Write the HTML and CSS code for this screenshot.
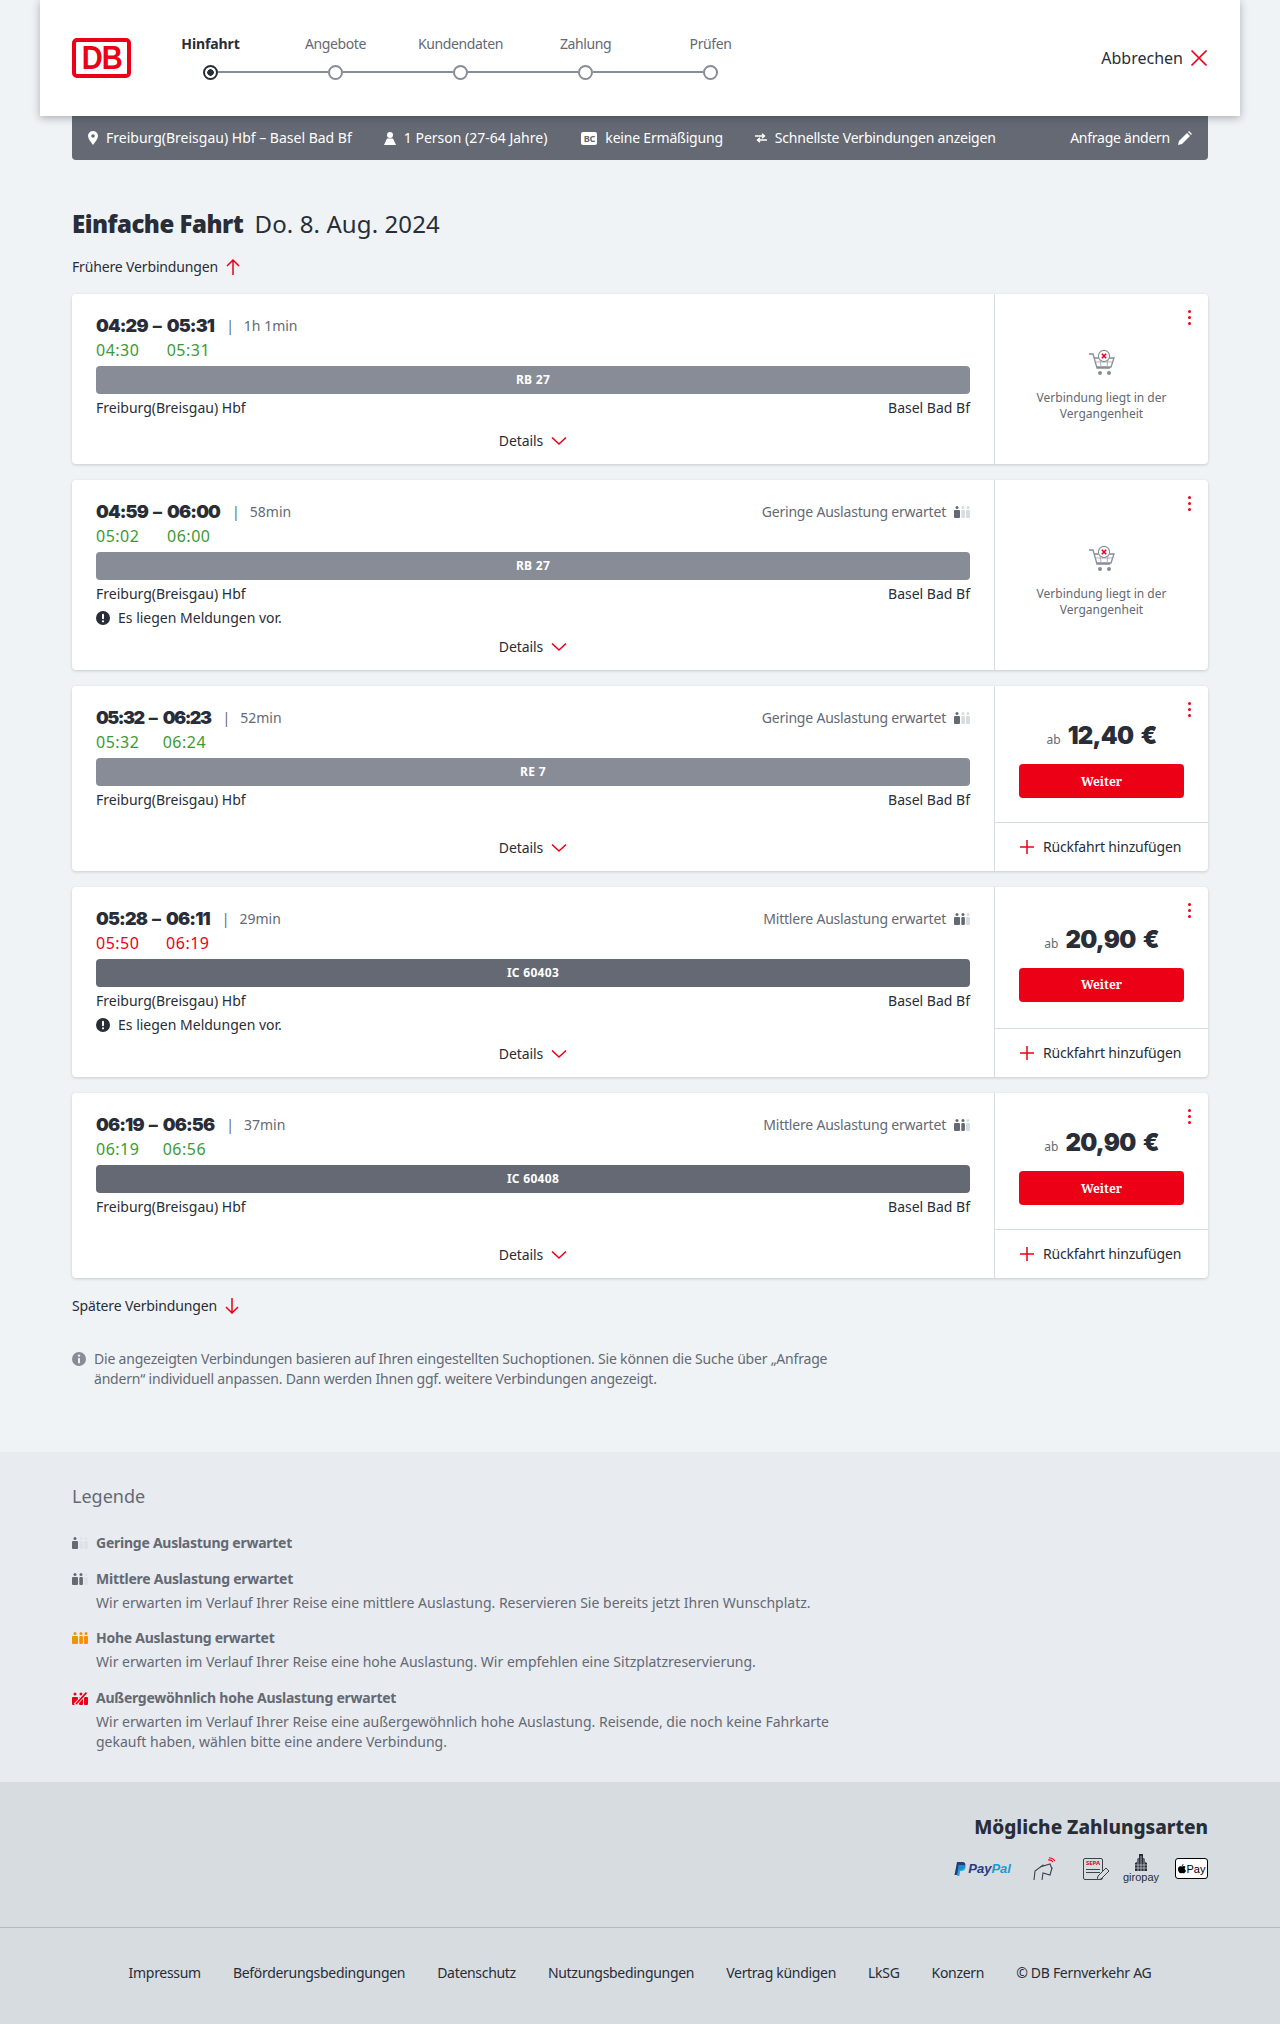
FILE: index.html
```html
<!DOCTYPE html>
<html lang="de">
<head>
    <meta charset="UTF-8">
    <meta name="viewport" content="width=device-width, initial-scale=1.0">
    <title>Einfache Fahrt</title>
    <link rel="stylesheet" href="styles.css">
</head>
<body>
    <svg class="defs" width="0" height="0">
        <symbol id="occ" viewBox="0 0 16 12">
            <circle class="p1" cx="3" cy="1.5" r="1.5"/><rect class="p1" x="0" y="4" width="6" height="8" rx="1"/>
            <circle class="p2" cx="9" cy="1.5" r="1.5"/><rect class="p2" x="7.3" y="4" width="3.6" height="8" rx="1"/>
            <circle class="p3" cx="14" cy="1.5" r="1.5"/><rect class="p3" x="12" y="4" width="4" height="8" rx="1"/>
        </symbol>
        <symbol id="cart" viewBox="0 0 28 28">
            <path d="M1 5h4l4 14h13M6 9h20l-3 9H9" fill="none" stroke="#878c96" stroke-width="1.3"/>
            <path d="M8 13h16M12 9l1 9M20 9l-1 9" fill="none" stroke="#afb4bb" stroke-width="1.1"/>
            <circle cx="16" cy="7" r="5.6" fill="#fff" stroke="#878c96" stroke-width="1.1"/>
            <path d="M13.8 4.8l4.4 4.4M18.2 4.8l-4.4 4.4" stroke="#ec0016" stroke-width="1.6"/>
            <circle cx="12" cy="24" r="2" fill="#878c96"/><circle cx="21" cy="24" r="2" fill="#878c96"/>
        </symbol>
        <symbol id="chev" viewBox="0 0 16 10">
            <path d="M1 1.5l7 6.5 7-6.5" fill="none" stroke="#ec0016" stroke-width="1.6"/>
        </symbol>
        <symbol id="plus" viewBox="0 0 16 16">
            <path d="M8 1v14M1 8h14" stroke="#ec0016" stroke-width="1.5"/>
        </symbol>
        <symbol id="alert" viewBox="0 0 14 14">
            <circle cx="7" cy="7" r="7" fill="#282d37"/><rect x="6" y="2.8" width="2" height="5.4" rx="1" fill="#fff"/><circle cx="7" cy="10.3" r="1.1" fill="#fff"/>
        </symbol>
    </svg>

    <header class="topbar">
        <div class="db-logo"><span>DB</span></div>
        <div class="steps">
            <div class="step-labels">
                <span class="current">Hinfahrt</span>
                <span>Angebote</span>
                <span>Kundendaten</span>
                <span>Zahlung</span>
                <span>Prüfen</span>
            </div>
            <div class="step-track">
                <i class="dot active"></i><b></b>
                <i class="dot"></i><b></b>
                <i class="dot"></i><b></b>
                <i class="dot"></i><b></b>
                <i class="dot"></i>
            </div>
        </div>
        <a class="cancel">Abbrechen
            <svg width="18" height="18" viewBox="0 0 18 18"><path d="M1.5 1.5l15 15M16.5 1.5l-15 15" stroke="#ec0016" stroke-width="1.7"/></svg>
        </a>
    </header>

    <div class="summary">
        <span class="summary-item">
            <svg width="10" height="14" viewBox="0 0 10 14"><path d="M5 0a5 5 0 0 1 5 5c0 3-3 6-5 9-2-3-5-6-5-9a5 5 0 0 1 5-5z" fill="#fff"/><circle cx="5" cy="5" r="1.8" fill="#646973"/></svg>
            Freiburg(Breisgau) Hbf – Basel Bad Bf
        </span>
        <span class="summary-item">
            <svg width="12" height="13" viewBox="0 0 12 13"><circle cx="6" cy="3" r="3" fill="#fff"/><path d="M3 6.5h6l3 6.5H0z" fill="#fff"/></svg>
            1 Person (27-64 Jahre)
        </span>
        <span class="summary-item tight">
            <span class="bc-icon">BC</span>
            keine Ermäßigung
        </span>
        <span class="summary-item tight">
            <svg width="12" height="10" viewBox="0 0 12 10"><path d="M0 3h9M7 0.8L9.5 3 7 5.2M12 7H3M5 4.8L2.5 7 5 9.2" fill="none" stroke="#fff" stroke-width="1.4"/></svg>
            Schnellste Verbindungen anzeigen
        </span>
        <a class="summary-edit">Anfrage ändern
            <svg width="14" height="14" viewBox="0 0 14 14"><path d="M0 14l1-4 8-8 3 3-8 8zM10 1l1-1 3 3-1 1z" fill="#fff"/></svg>
        </a>
    </div>

    <main class="content">
        <h1 class="page-title"><strong>Einfache Fahrt</strong> Do. 8. Aug. 2024</h1>

        <a class="more-link">Frühere Verbindungen
            <svg width="14" height="16" viewBox="0 0 14 16"><path d="M7 16V1M1 7l6-6 6 6" fill="none" stroke="#ec0016" stroke-width="1.5"/></svg>
        </a>

        <div class="card-list">
            <article class="card">
                <div class="card-main">
                    <div class="times">
                        <b class="t">04:29</b><b class="dash">–</b><b class="t">05:31</b>
                        <div class="times-rest"><span class="sep">|</span><span class="dur">1h 1min</span></div>
                        <span class="rt ok">04:30</span><span></span><span class="rt ok">05:31</span>
                    </div>
                    <div class="train light">RB 27</div>
                    <div class="stations"><span>Freiburg(Breisgau) Hbf</span><span>Basel Bad Bf</span></div>
                    <div class="details">Details <svg width="16" height="10"><use href="#chev"/></svg></div>
                </div>
                <div class="card-side">
                    <div class="kebab"><i></i><i></i><i></i></div>
                    <div class="past">
                        <svg width="28" height="28"><use href="#cart"/></svg>
                        <p>Verbindung liegt in der Vergangenheit</p>
                    </div>
                </div>
            </article>

            <article class="card">
                <div class="card-main">
                    <div class="times">
                        <b class="t">04:59</b><b class="dash">–</b><b class="t">06:00</b>
                        <div class="times-rest"><span class="sep">|</span><span class="dur">58min</span><span class="occ">Geringe Auslastung erwartet <svg class="lvl1" width="16" height="12"><use href="#occ"/></svg></span></div>
                        <span class="rt ok">05:02</span><span></span><span class="rt ok">06:00</span>
                    </div>
                    <div class="train light">RB 27</div>
                    <div class="stations"><span>Freiburg(Breisgau) Hbf</span><span>Basel Bad Bf</span></div>
                    <div class="notice"><svg width="14" height="14"><use href="#alert"/></svg> Es liegen Meldungen vor.</div>
                    <div class="details">Details <svg width="16" height="10"><use href="#chev"/></svg></div>
                </div>
                <div class="card-side">
                    <div class="kebab"><i></i><i></i><i></i></div>
                    <div class="past">
                        <svg width="28" height="28"><use href="#cart"/></svg>
                        <p>Verbindung liegt in der Vergangenheit</p>
                    </div>
                </div>
            </article>

            <article class="card">
                <div class="card-main">
                    <div class="times narrow">
                        <b class="t">05:32</b><b class="dash">–</b><b class="t">06:23</b>
                        <div class="times-rest"><span class="sep">|</span><span class="dur">52min</span><span class="occ">Geringe Auslastung erwartet <svg class="lvl1" width="16" height="12"><use href="#occ"/></svg></span></div>
                        <span class="rt ok">05:32</span><span></span><span class="rt ok">06:24</span>
                    </div>
                    <div class="train light">RE 7</div>
                    <div class="stations"><span>Freiburg(Breisgau) Hbf</span><span>Basel Bad Bf</span></div>
                    <div class="details">Details <svg width="16" height="10"><use href="#chev"/></svg></div>
                </div>
                <div class="card-side">
                    <div class="kebab"><i></i><i></i><i></i></div>
                    <div class="offer">
                        <div class="price"><small>ab</small> 12,40 €</div>
                        <button class="next">Weiter</button>
                    </div>
                    <div class="return"><svg width="16" height="16"><use href="#plus"/></svg> Rückfahrt hinzufügen</div>
                </div>
            </article>

            <article class="card">
                <div class="card-main">
                    <div class="times">
                        <b class="t">05:28</b><b class="dash">–</b><b class="t">06:11</b>
                        <div class="times-rest"><span class="sep">|</span><span class="dur">29min</span><span class="occ">Mittlere Auslastung erwartet <svg class="lvl2" width="16" height="12"><use href="#occ"/></svg></span></div>
                        <span class="rt late">05:50</span><span></span><span class="rt late">06:19</span>
                    </div>
                    <div class="train">IC 60403</div>
                    <div class="stations"><span>Freiburg(Breisgau) Hbf</span><span>Basel Bad Bf</span></div>
                    <div class="notice"><svg width="14" height="14"><use href="#alert"/></svg> Es liegen Meldungen vor.</div>
                    <div class="details">Details <svg width="16" height="10"><use href="#chev"/></svg></div>
                </div>
                <div class="card-side">
                    <div class="kebab"><i></i><i></i><i></i></div>
                    <div class="offer">
                        <div class="price"><small>ab</small> 20,90 €</div>
                        <button class="next">Weiter</button>
                    </div>
                    <div class="return"><svg width="16" height="16"><use href="#plus"/></svg> Rückfahrt hinzufügen</div>
                </div>
            </article>

            <article class="card">
                <div class="card-main">
                    <div class="times">
                        <b class="t">06:19</b><b class="dash">–</b><b class="t">06:56</b>
                        <div class="times-rest"><span class="sep">|</span><span class="dur">37min</span><span class="occ">Mittlere Auslastung erwartet <svg class="lvl2" width="16" height="12"><use href="#occ"/></svg></span></div>
                        <span class="rt ok">06:19</span><span></span><span class="rt ok">06:56</span>
                    </div>
                    <div class="train">IC 60408</div>
                    <div class="stations"><span>Freiburg(Breisgau) Hbf</span><span>Basel Bad Bf</span></div>
                    <div class="details">Details <svg width="16" height="10"><use href="#chev"/></svg></div>
                </div>
                <div class="card-side">
                    <div class="kebab"><i></i><i></i><i></i></div>
                    <div class="offer">
                        <div class="price"><small>ab</small> 20,90 €</div>
                        <button class="next">Weiter</button>
                    </div>
                    <div class="return"><svg width="16" height="16"><use href="#plus"/></svg> Rückfahrt hinzufügen</div>
                </div>
            </article>
        </div>

        <a class="more-link later">Spätere Verbindungen
            <svg width="14" height="16" viewBox="0 0 14 16"><path d="M7 0v15M1 9l6 6 6-6" fill="none" stroke="#ec0016" stroke-width="1.5"/></svg>
        </a>

        <div class="hint">
            <svg width="14" height="14" viewBox="0 0 14 14"><circle cx="7" cy="7" r="7" fill="#878c96"/><circle cx="7" cy="3.6" r="1.2" fill="#eff3f6"/><rect x="6" y="5.8" width="2" height="5.6" rx="1" fill="#eff3f6"/></svg>
            <p>Die angezeigten Verbindungen basieren auf Ihren eingestellten Suchoptionen. Sie können die Suche über „Anfrage ändern“ individuell anpassen. Dann werden Ihnen ggf. weitere Verbindungen angezeigt.</p>
        </div>
    </main>

    <section class="legend">
        <div class="legend-inner">
            <h2>Legende</h2>
            <div class="legend-item">
                <svg class="lvl1 soft" width="16" height="12"><use href="#occ"/></svg>
                <div><h3>Geringe Auslastung erwartet</h3></div>
            </div>
            <div class="legend-item">
                <svg class="lvl2 soft" width="16" height="12"><use href="#occ"/></svg>
                <div><h3>Mittlere Auslastung erwartet</h3>
                <p>Wir erwarten im Verlauf Ihrer Reise eine mittlere Auslastung. Reservieren Sie bereits jetzt Ihren Wunschplatz.</p></div>
            </div>
            <div class="legend-item">
                <svg class="lvl3" width="16" height="12"><use href="#occ"/></svg>
                <div><h3>Hohe Auslastung erwartet</h3>
                <p>Wir erwarten im Verlauf Ihrer Reise eine hohe Auslastung. Wir empfehlen eine Sitzplatzreservierung.</p></div>
            </div>
            <div class="legend-item">
                <svg width="16" height="13" viewBox="0 0 16 13"><circle cx="3" cy="2" r="1.5" fill="#ec0016"/><circle cx="9" cy="2" r="1.5" fill="#ec0016"/><rect x="0" y="5" width="6" height="8" rx="1" fill="#ec0016"/><rect x="7" y="5" width="4" height="8" rx="1" fill="#ec0016"/><rect x="12" y="5" width="4" height="8" rx="1" fill="#ec0016"/><path d="M3 13L15 0" stroke="#e8ebf0" stroke-width="3.4"/><path d="M4 12L14.5 0.6" stroke="#ec0016" stroke-width="1.8"/></svg>
                <div><h3>Außergewöhnlich hohe Auslastung erwartet</h3>
                <p>Wir erwarten im Verlauf Ihrer Reise eine außergewöhnlich hohe Auslastung. Reisende, die noch keine Fahrkarte gekauft haben, wählen bitte eine andere Verbindung.</p></div>
            </div>
        </div>
    </section>

    <footer class="footer">
        <div class="payment">
            <h2>Mögliche Zahlungsarten</h2>
            <div class="pay-icons">
                <span class="paypal">
                    <svg width="12" height="14" viewBox="0 0 12 14"><path d="M3 0h5c3 0 4 2 3 4.500C10 7 8 8 6 8H4.500L3.500 13H0.500z" fill="#253b80"/><path d="M4.500 3h5c2 0 2.500 1.500 2 3-.6 2-2 3-4 3H6.200l-.8 5H3z" fill="#179bd7" opacity=".85"/></svg>
                    <em><b>Pay</b>Pal</em>
                </span>
                <svg class="pay-card" width="22" height="24" viewBox="0 0 22 24"><path d="M1 23l1-9 8-6 9 3-2 7-7-2-1 7" fill="none" stroke="#3c414b" stroke-width="1.1"/><path d="M7 10l10-3 2 5" fill="#d7dce1" stroke="#3c414b" stroke-width="1.1"/><path d="M15 3a5 5 0 0 1 5 2M16 0.800a8 8 0 0 1 6 3" fill="none" stroke="#ec0016" stroke-width="1.1"/></svg>
                <span class="sepa">
                    <span class="sepa-box"><b>SEPA</b><i></i><i></i></span>
                    <svg width="14" height="14" viewBox="0 0 14 14"><path d="M0 14l1-4 8-8 3 3-8 8z" fill="#d7dce1" stroke="#3c414b"/></svg>
                </span>
                <span class="giro">
                    <svg width="16" height="17" viewBox="0 0 16 17"><path d="M6 0h4v4l2 1v3l2 1v8H2V9l2-1V5l2-1z" fill="#282d37"/><path d="M2 11h12M2 14h12M5 5v12M8 2v15M11 5v12" stroke="#d7dce1" stroke-width=".7"/></svg>
                    <span>giropay</span>
                </span>
                <span class="apple-pay"><svg width="8" height="10" viewBox="0 0 8 10"><path d="M5.500 0c0 1-.7 2-1.700 2 0-1 .8-2 1.700-2zM4 2.500c.6 0 1-.4 1.800-.4.500 0 1.300.2 1.800 1-1.400.9-1.100 2.800.4 3.400-.4 1.100-1.200 2.800-2.200 2.800-.6 0-.9-.4-1.600-.4s-1 .4-1.600.4C1.500 9.300 0 7 0 5.200 0 3.400 1.200 2.300 2.300 2.300c.7 0 1.200.2 1.700.2z" fill="#000"/></svg>Pay</span>
            </div>
        </div>
        <nav class="footer-links">
            <a>Impressum</a>
            <a>Beförderungsbedingungen</a>
            <a>Datenschutz</a>
            <a>Nutzungsbedingungen</a>
            <a>Vertrag kündigen</a>
            <a>LkSG</a>
            <a>Konzern</a>
            <a>© DB Fernverkehr AG</a>
        </nav>
    </footer>
</body>
</html>
```

FILE: styles.css
```css
* {
    box-sizing: border-box;
}

body {
    margin: 0;
    font-family: "Noto Sans", sans-serif;
    font-size: 14px;
    line-height: 20px;
    color: #282d37;
    background-color: #eff3f6;
}

.defs {
    display: block;
    height: 0;
}

/* header */
.topbar {
    display: flex;
    align-items: center;
    width: 1200px;
    height: 116px;
    margin: 0 auto;
    padding: 0 32px;
    background-color: #fff;
    box-shadow: 0 2px 8px rgba(40, 45, 55, 0.35);
    position: relative;
}

.db-logo {
    display: flex;
    justify-content: center;
    align-items: center;
    width: 59px;
    height: 40px;
    border: 4px solid #ec0016;
    border-radius: 5px;
    background-color: #fff;
}

.db-logo span {
    font-family: "Liberation Sans", sans-serif;
    font-weight: 700;
    font-size: 33px;
    letter-spacing: -1px;
    line-height: 32px;
    color: #ec0016;
    transform: scaleX(0.88);
}

.steps {
    width: 625px;
    margin-left: 17px;
    padding-bottom: 3px;
}

.step-labels {
    display: grid;
    grid-template-columns: repeat(5, 125px);
    text-align: center;
    color: #646973;
    letter-spacing: -0.4px;
}

.step-labels .current {
    font-weight: 700;
    color: #282d37;
    letter-spacing: -0.1px;
}

.step-track {
    display: flex;
    align-items: center;
    margin: 11px 55px 0;
}

.step-track b {
    flex: 1;
    height: 2px;
    background-color: #878c96;
}

.dot {
    width: 15px;
    height: 15px;
    border: 2px solid #878c96;
    border-radius: 50%;
    background-color: #fff;
}

.dot.active {
    border-color: #282d37;
    background: radial-gradient(circle, #282d37 3px, #fff 3.5px);
}

.cancel {
    display: flex;
    align-items: center;
    gap: 7px;
    margin-left: auto;
    font-size: 16px;
}

/* search summary */
.summary {
    display: flex;
    align-items: center;
    width: 1136px;
    height: 44px;
    margin: 0 auto;
    padding: 0 16px;
    gap: 32px;
    border-radius: 0 0 4px 4px;
    background-color: #646973;
    color: #fff;
}

.summary-item {
    display: flex;
    align-items: center;
    gap: 8px;
}

.summary-item.tight {
    letter-spacing: -0.2px;
}

.bc-icon {
    width: 16px;
    height: 13px;
    margin-left: 2px;
    border-radius: 2px;
    background-color: #fff;
    color: #646973;
    font-size: 9px;
    font-weight: 700;
    line-height: 13px;
    text-align: center;
}

.summary-edit {
    display: flex;
    align-items: center;
    gap: 8px;
    margin-left: auto;
    letter-spacing: -0.25px;
}

/* connections */
.content {
    width: 1136px;
    margin: 0 auto;
    padding-bottom: 63px;
}

.page-title {
    margin: 48px 0 0;
    font-size: 24px;
    line-height: 32px;
    font-weight: 400;
    letter-spacing: 0.1px;
}

.page-title strong {
    font-weight: 900;
    letter-spacing: -0.5px;
    margin-right: 5px;
}

.more-link {
    display: flex;
    align-items: center;
    gap: 8px;
    margin-top: 17px;
    height: 20px;
    letter-spacing: -0.15px;
}

.more-link.later {
    margin-top: 18px;
}

.card-list {
    display: flex;
    flex-direction: column;
    gap: 16px;
    margin-top: 17px;
}

.card {
    display: flex;
    min-height: 170px;
    border-radius: 4px;
    background-color: #fff;
    box-shadow: 0 1px 3px rgba(40, 45, 55, 0.2);
}

.card-main {
    display: flex;
    flex-direction: column;
    width: 922px;
    padding: 20px 24px 13px;
}

.times {
    display: grid;
    grid-template-columns: auto auto auto 1fr;
    line-height: 24px;
}

.t {
    font-family: "Inter", sans-serif;
    font-size: 18px;
    font-weight: 900;
    letter-spacing: -0.85px;
}

.times.narrow .t {
    letter-spacing: -1.5px;
}

.dash {
    padding: 0 5px;
    font-family: "Inter", sans-serif;
    font-size: 18px;
    font-weight: 800;
}

.times-rest {
    display: flex;
    align-items: center;
    color: #646973;
}

.sep {
    margin: 0 10px 0 12px;
}

.occ {
    display: flex;
    align-items: center;
    gap: 8px;
    margin-left: auto;
    letter-spacing: -0.2px;
}

.rt {
    font-size: 16px;
    letter-spacing: 0.5px;
}

.rt.ok {
    color: #3c9a34;
}

.rt.late {
    color: #ec0016;
}

.train {
    height: 28px;
    margin-top: 4px;
    border-radius: 4px;
    background-color: #646973;
    color: #fff;
    font-size: 12px;
    font-weight: 700;
    letter-spacing: 0.3px;
    line-height: 28px;
    text-align: center;
}

.train.light {
    background-color: #878c96;
}

.stations {
    display: flex;
    justify-content: space-between;
    margin-top: 4px;
}

.notice {
    display: flex;
    align-items: center;
    gap: 8px;
    margin: 4px 0 9px;
}

.details {
    display: flex;
    justify-content: center;
    align-items: center;
    gap: 8px;
    margin-top: auto;
    letter-spacing: -0.1px;
}

.card-side {
    display: flex;
    flex-direction: column;
    position: relative;
    width: 214px;
    border-left: 1px solid #d7dce1;
}

.kebab {
    position: absolute;
    top: 16px;
    right: 17px;
    display: flex;
    flex-direction: column;
    gap: 3px;
}

.kebab i {
    width: 3px;
    height: 3px;
    border-radius: 50%;
    background-color: #ec0016;
}

.past {
    display: flex;
    flex: 1;
    flex-direction: column;
    justify-content: center;
    align-items: center;
    padding-top: 13px;
    color: #646973;
    font-size: 12px;
    line-height: 16px;
    text-align: center;
}

.past p {
    width: 140px;
    margin: 13px 0 0;
}

.offer {
    display: flex;
    flex: 1;
    flex-direction: column;
    justify-content: center;
    padding: 33px 24px 24px;
}

.price {
    height: 34px;
    font-family: "Inter", sans-serif;
    font-size: 24px;
    font-weight: 900;
    letter-spacing: -0.7px;
    word-spacing: 3px;
    line-height: 34px;
    text-align: center;
}

.price small {
    font-family: "Noto Sans", sans-serif;
    font-size: 12px;
    font-weight: 400;
    letter-spacing: 0;
    word-spacing: 0;
    line-height: 1;
    color: #646973;
}

.next {
    height: 34px;
    margin-top: 11px;
    border: none;
    border-radius: 4px;
    background-color: #ec0016;
    color: #fff;
    font-family: "Noto Serif", "Noto Sans", sans-serif;
    font-size: 12px;
    font-weight: 700;
}

.return {
    display: flex;
    align-items: center;
    gap: 8px;
    height: 49px;
    padding-left: 24px;
    border-top: 1px solid #d7dce1;
    letter-spacing: -0.2px;
}

.hint {
    display: flex;
    gap: 8px;
    margin-top: 33px;
    color: #646973;
    letter-spacing: -0.2px;
}

.hint svg {
    margin-top: 3px;
    flex-shrink: 0;
}

.hint p {
    width: 760px;
    margin: 0;
}

/* occupancy icon levels, passed into the symbol through custom properties */
.p1 {
    fill: var(--p1, #d7dce1);
}

.p2 {
    fill: var(--p2, #d7dce1);
}

.p3 {
    fill: var(--p3, #d7dce1);
}

.lvl1 {
    --p1: #646973;
}

.lvl2 {
    --p1: #646973;
    --p2: #646973;
}

.lvl3 {
    --p1: #f39200;
    --p2: #f39200;
    --p3: #f39200;
}

.soft {
    --p3: #dfe3e8;
}

.lvl1.soft {
    --p2: #dfe3e8;
}

.legend {
    height: 330px;
    background-color: #e8ebf0;
}

.legend-inner {
    width: 1136px;
    margin: 0 auto;
    padding-top: 32px;
    color: #646973;
}

.legend h2 {
    margin: 0;
    font-size: 18px;
    line-height: 24px;
    font-weight: 400;
}

.legend-item {
    display: flex;
    gap: 8px;
    margin-top: 15.5px;
}

.legend-item:first-of-type {
    margin-top: 25px;
}

.legend-item svg {
    flex-shrink: 0;
    margin-top: 4px;
}

.legend-item h3 {
    margin: 0;
    font-size: 14px;
    line-height: 20px;
    font-weight: 700;
    letter-spacing: -0.25px;
}

.legend-item p {
    width: 760px;
    margin: 4px 0 0;
}

.footer {
    height: 242px;
    background-color: #d7dce1;
}

.payment {
    display: flex;
    flex-direction: column;
    align-items: flex-end;
    width: 1136px;
    height: 145px;
    margin: 0 auto;
    padding-top: 31px;
}

.payment h2 {
    margin: 0;
    font-size: 19px;
    line-height: 28px;
    font-weight: 800;
}

.pay-icons {
    display: flex;
    align-items: center;
    margin-top: 13px;
}

.paypal {
    display: flex;
    align-items: center;
    gap: 2px;
}

.paypal em {
    font-family: "Liberation Sans", sans-serif;
    font-size: 13px;
    font-weight: 700;
    color: #179bd7;
}

.paypal em b {
    color: #253b80;
}

.pay-card {
    margin-left: 22px;
}

.sepa {
    display: flex;
    align-items: flex-end;
    margin-left: 28px;
}

.sepa-box {
    display: block;
    width: 20px;
    height: 22px;
    padding: 1px 2px;
    border: 1px solid #3c414b;
    border-radius: 2px;
}

.sepa-box b {
    display: block;
    font-size: 6px;
    line-height: 7px;
    color: #ec0016;
}

.sepa-box i {
    display: block;
    height: 1px;
    margin-top: 2px;
    background-color: #3c414b;
}

.sepa svg {
    margin-left: -6px;
}

.giro {
    display: flex;
    flex-direction: column;
    align-items: center;
    margin-left: 12px;
    font-family: "Liberation Sans", sans-serif;
    font-size: 11px;
    line-height: 12px;
}

.apple-pay {
    display: flex;
    justify-content: center;
    align-items: center;
    gap: 1px;
    width: 33px;
    height: 21px;
    margin-left: 16px;
    border: 1px solid #000;
    border-radius: 3px;
    background-color: #fff;
    font-family: "Liberation Sans", sans-serif;
    font-size: 11px;
    color: #000;
}

.footer-links {
    display: flex;
    justify-content: center;
    align-items: center;
    gap: 32px;
    height: 97px;
    border-top: 1px solid #b4b9c0;
    padding-bottom: 7px;
    letter-spacing: -0.3px;
}
```
